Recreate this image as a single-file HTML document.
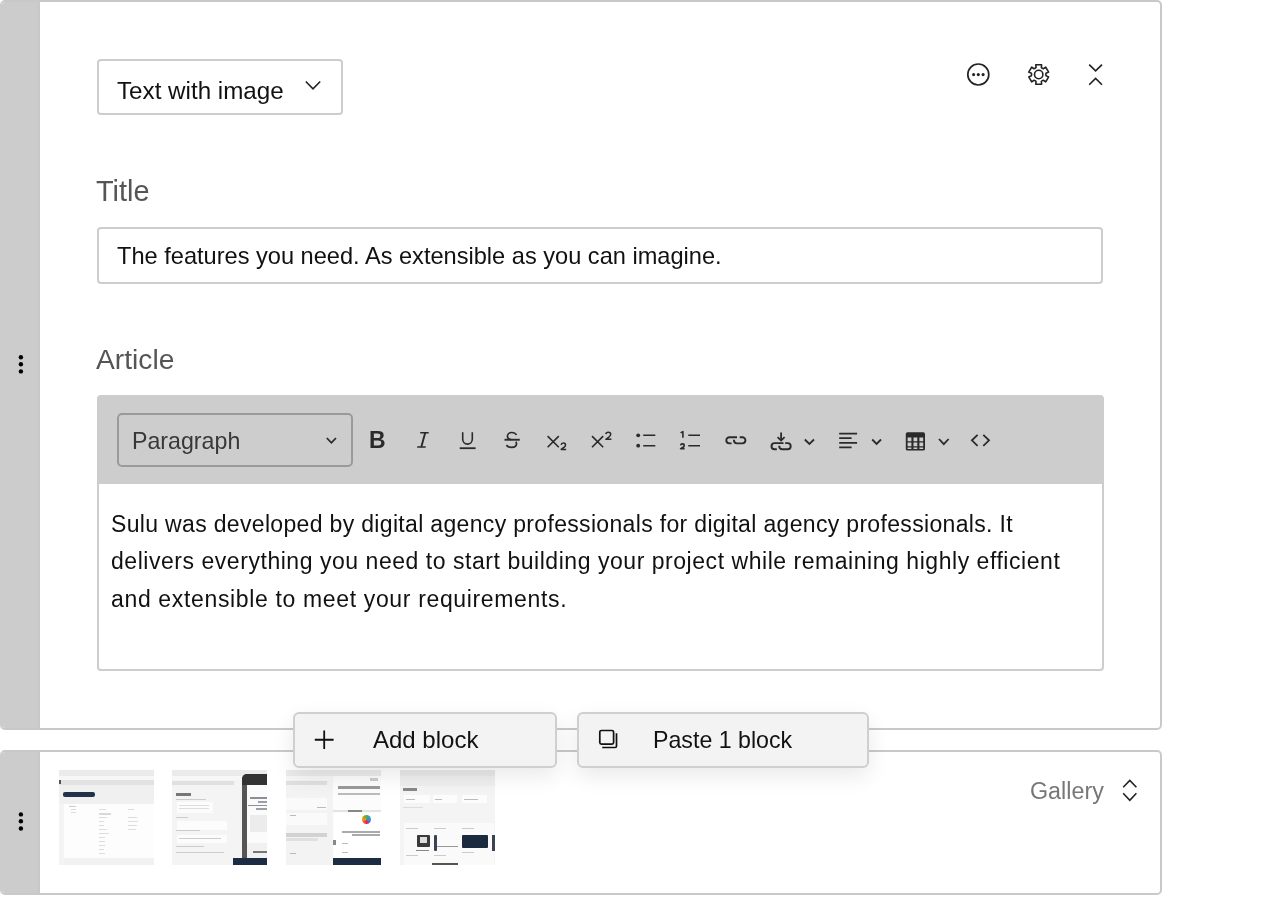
<!DOCTYPE html>
<html><head><meta charset="utf-8">
<style>
html,body{margin:0;padding:0;background:#fff;width:1276px;height:899px;overflow:hidden;font-family:"Liberation Sans",sans-serif;}
.abs{position:absolute;}
.card{position:absolute;box-sizing:border-box;border:2px solid #c9c9c9;border-left-color:#cccccc;border-radius:5px;background:#fff;overflow:hidden;}
.side{position:absolute;left:0;top:0;bottom:0;width:36px;background:#cccccc;border-right:2px solid #c8c8c8;}
.dot{position:absolute;width:4.5px;height:4.5px;border-radius:50%;background:#000;}
.t{position:absolute;white-space:nowrap;line-height:1;will-change:transform;}
.box{position:absolute;box-sizing:border-box;border:2px solid #cdcdcd;border-radius:4px;}
.btn{position:absolute;box-sizing:border-box;border:2px solid #cfcfcf;border-radius:6px;background:#f3f3f3;box-shadow:0 8px 22px rgba(0,0,0,0.09);}
svg.ov{position:absolute;left:0;top:0;overflow:visible;}
.thumb{position:absolute;top:770px;width:95px;height:95px;background:#f4f4f4;overflow:hidden;filter:blur(0.7px);}
</style></head><body>

<!-- Card 1 -->
<div class="card" style="left:0;top:0;width:1162px;height:730px;">
  <div class="side"></div>
</div>

<!-- type dropdown -->
<div class="box" style="left:97px;top:59px;width:246px;height:56px;"></div>
<div class="t" style="left:117px;top:78.9px;font-size:24.2px;color:#111;">Text with image</div>

<!-- Title -->
<div class="t" style="left:96.3px;top:176.8px;font-size:28.9px;color:#555;">Title</div>
<div class="box" style="left:97px;top:227px;width:1006px;height:57px;"></div>
<div class="t" style="left:117px;top:245.2px;font-size:23.6px;color:#111;">The features you need. As extensible as you can imagine.</div>

<!-- Article -->
<div class="t" style="left:96.3px;top:345.3px;font-size:28.2px;color:#555;">Article</div>
<div class="box" style="left:97px;top:395px;width:1007px;height:276px;border-color:#cdcdcd;"></div>
<div class="abs" style="left:97px;top:395px;width:1007px;height:89px;background:#cdcdcd;border-radius:5px 5px 0 0;"></div>
<div class="box" style="left:117px;top:413px;width:236px;height:54px;border-color:#9a9a9a;border-radius:5px;"></div>
<div class="t" style="left:132.4px;top:429.8px;font-size:23.2px;color:#383838;">Paragraph</div>
<div class="t" style="left:369.3px;top:428.6px;font-size:23px;font-weight:bold;color:#2a2a2a;">B</div>

<div class="t" style="left:111px;top:505.8px;font-size:23px;line-height:37.65px;color:#111;letter-spacing:0.33px;">Sulu was developed by digital agency professionals for digital agency professionals. It</div>
<div class="t" style="left:111px;top:543.45px;font-size:23px;line-height:37.65px;color:#111;letter-spacing:0.54px;">delivers everything you need to start building your project while remaining highly efficient</div>
<div class="t" style="left:111px;top:581.1px;font-size:23px;line-height:37.65px;color:#111;letter-spacing:0.65px;">and extensible to meet your requirements.</div>

<!-- Card 2 -->
<div class="card" style="left:0;top:749.5px;width:1162px;height:145.5px;">
  <div class="side"></div>
</div>
<div class="t" style="left:1030px;top:779.9px;font-size:23.3px;color:#777;">Gallery</div>

<div class="thumb" style="left:59px;">
  <div class="abs" style="left:0;top:0;width:95px;height:6px;background:#ebebeb;"></div>
  <div class="abs" style="left:0;top:6px;width:95px;height:4px;background:#f7f7f7;"></div>
  <div class="abs" style="left:0;top:10px;width:95px;height:5px;background:#e2e2e2;"></div>
  <div class="abs" style="left:0;top:15px;width:95px;height:19px;background:#f0f0f0;"></div>
  <div class="abs" style="left:3.5px;top:21.5px;width:32.5px;height:5.5px;background:#22324a;border-radius:2px;"></div>
  <div class="abs" style="left:5px;top:34px;width:90px;height:54px;background:#fdfdfd;"></div>
  <div class="abs" style="left:5px;top:88px;width:90px;height:7px;background:#f1f1f1;"></div>
  <div class="abs" style="left:10px;top:36px;width:7px;height:1px;background:#ccc;"></div>
  <div class="abs" style="left:12px;top:39px;width:5px;height:1px;background:#ddd;"></div>
  <div class="abs" style="left:12px;top:42px;width:5px;height:1px;background:#ddd;"></div>
  <div class="abs" style="left:40px;top:39px;width:7px;height:1px;background:#ddd;"></div>
  <div class="abs" style="left:40px;top:43px;width:12px;height:2px;background:#d8d8d8;"></div>
  <div class="abs" style="left:40px;top:47px;width:8px;height:1px;background:#ddd;"></div>
  <div class="abs" style="left:40px;top:51px;width:5px;height:1px;background:#ddd;"></div>
  <div class="abs" style="left:40px;top:55px;width:5px;height:1px;background:#ddd;"></div>
  <div class="abs" style="left:40px;top:59px;width:8px;height:1px;background:#ddd;"></div>
  <div class="abs" style="left:40px;top:63px;width:10px;height:1px;background:#ddd;"></div>
  <div class="abs" style="left:40px;top:67px;width:6px;height:1px;background:#ddd;"></div>
  <div class="abs" style="left:40px;top:71px;width:6px;height:1px;background:#ddd;"></div>
  <div class="abs" style="left:40px;top:75px;width:6px;height:1px;background:#ddd;"></div>
  <div class="abs" style="left:40px;top:79px;width:5px;height:1px;background:#ddd;"></div>
  <div class="abs" style="left:40px;top:83px;width:6px;height:1px;background:#ddd;"></div>
  <div class="abs" style="left:69px;top:39px;width:6px;height:1px;background:#ddd;"></div>
  <div class="abs" style="left:69px;top:47px;width:9px;height:1px;background:#ddd;"></div>
  <div class="abs" style="left:69px;top:51px;width:10px;height:1px;background:#ddd;"></div>
  <div class="abs" style="left:69px;top:55px;width:9px;height:1px;background:#ddd;"></div>
  <div class="abs" style="left:69px;top:59px;width:8px;height:1px;background:#ddd;"></div>
  <div class="abs" style="left:0;top:10px;width:2px;height:4px;background:#555;"></div>
</div>
<div class="thumb" style="left:172px;">
  <div class="abs" style="left:0;top:0;width:95px;height:6px;background:#ebebeb;"></div>
  <div class="abs" style="left:0;top:6px;width:95px;height:4px;background:#f7f7f7;"></div>
  <div class="abs" style="left:0;top:10.5px;width:62px;height:4.5px;background:#e0e0e0;"></div>
  <div class="abs" style="left:4px;top:22.5px;width:15px;height:3px;background:#777;"></div>
  <div class="abs" style="left:4px;top:29px;width:30px;height:1px;background:#ccc;"></div>
  <div class="abs" style="left:5px;top:32px;width:36px;height:11px;background:#fcfcfc;"></div>
  <div class="abs" style="left:7px;top:35px;width:30px;height:1px;background:#ddd;"></div>
  <div class="abs" style="left:7px;top:38px;width:30px;height:1px;background:#ddd;"></div>
  <div class="abs" style="left:4px;top:47px;width:12px;height:1px;background:#ccc;"></div>
  <div class="abs" style="left:5px;top:51px;width:50px;height:9px;background:#fcfcfc;"></div>
  <div class="abs" style="left:4px;top:60px;width:24px;height:1px;background:#ccc;"></div>
  <div class="abs" style="left:5px;top:65px;width:50px;height:8px;background:#fcfcfc;"></div>
  <div class="abs" style="left:7px;top:68px;width:42px;height:1px;background:#ccc;"></div>
  <div class="abs" style="left:4px;top:76px;width:28px;height:1px;background:#ccc;"></div>
  <div class="abs" style="left:4px;top:82px;width:48px;height:1px;background:#ccc;"></div>
  <div class="abs" style="left:70px;top:4px;width:30px;height:88px;background:#555;border-radius:5px 0 0 0;"></div><div class="abs" style="left:70px;top:4px;width:30px;height:11px;background:#333;border-radius:5px 0 0 0;"></div>
  <div class="abs" style="left:74.5px;top:15px;width:25px;height:75px;background:#fbfbfb;"></div>
  <div class="abs" style="left:78px;top:27px;width:20px;height:2px;background:#8a8f99;"></div>
  <div class="abs" style="left:86px;top:31px;width:12px;height:1.5px;background:#9a9fa8;"></div>
  <div class="abs" style="left:76px;top:34.5px;width:22px;height:1.5px;background:#8a8f99;"></div>
  <div class="abs" style="left:84px;top:38px;width:14px;height:1.5px;background:#9a9fa8;"></div>
  <div class="abs" style="left:78px;top:45px;width:20px;height:17px;background:#ececec;"></div>
  <div class="abs" style="left:74.5px;top:73px;width:25px;height:16px;background:#f1f1f1;"></div>
  <div class="abs" style="left:81px;top:81px;width:17px;height:1.5px;background:#777;"></div>
  <div class="abs" style="left:61px;top:87.5px;width:40px;height:7.5px;background:#1c2c42;"></div>
</div>
<div class="thumb" style="left:286px;">
  <div class="abs" style="left:0;top:0;width:95px;height:6px;background:#ebebeb;"></div>
  <div class="abs" style="left:0;top:6px;width:46px;height:4px;background:#f7f7f7;"></div>
  <div class="abs" style="left:0;top:10.5px;width:41px;height:4.5px;background:#e0e0e0;"></div>
  <div class="abs" style="left:0;top:15px;width:46px;height:80px;background:#f3f3f3;"></div>
  <div class="abs" style="left:0;top:28px;width:41px;height:12px;background:#fafafa;"></div>
  <div class="abs" style="left:0;top:43px;width:41px;height:12px;background:#fafafa;"></div>
  <div class="abs" style="left:31px;top:37px;width:9px;height:1px;background:#bbb;"></div>
  <div class="abs" style="left:4px;top:45px;width:6px;height:1px;background:#bbb;"></div>
  <div class="abs" style="left:0;top:62.5px;width:41px;height:4px;background:#d2d2d2;"></div>
  <div class="abs" style="left:0;top:68px;width:32px;height:3px;background:#e0e0e0;"></div>
  <div class="abs" style="left:4px;top:83px;width:6px;height:1px;background:#bbb;"></div>
  <div class="abs" style="left:47px;top:6px;width:48px;height:89px;background:#fcfcfc;"></div>
  <div class="abs" style="left:52px;top:15.5px;width:42px;height:3px;background:#999;"></div>
  <div class="abs" style="left:52px;top:23px;width:42px;height:1.5px;background:#bbb;"></div>
  <div class="abs" style="left:84px;top:8px;width:8px;height:3px;background:#ccc;"></div>
  <div class="abs" style="left:47px;top:40px;width:48px;height:2px;background:#e3e3e3;"></div>
  <div class="abs" style="left:62px;top:39.5px;width:14px;height:2.5px;background:#888;"></div>
  <div class="abs" style="left:48px;top:43px;width:47px;height:45px;background:#fff;"></div>
  <div class="abs" style="left:76px;top:45px;width:9px;height:9px;border-radius:50%;background:conic-gradient(#4caf50,#2196f3,#e91e63,#ff9800,#4caf50);"></div>
  <div class="abs" style="left:56px;top:61px;width:38px;height:2px;background:#aaa;"></div>
  <div class="abs" style="left:66px;top:64px;width:28px;height:2px;background:#aaa;"></div>
  <div class="abs" style="left:56px;top:73px;width:6px;height:1px;background:#bbb;"></div>
  <div class="abs" style="left:56px;top:82px;width:6px;height:1px;background:#bbb;"></div>
  <div class="abs" style="left:47px;top:70px;width:2.5px;height:5px;background:#888;"></div>
  <div class="abs" style="left:47px;top:87.5px;width:48px;height:7.5px;background:#1c2c42;"></div>
</div>
<div class="thumb" style="left:400px;">
  <div class="abs" style="left:0;top:0;width:95px;height:6px;background:#e8e8e8;"></div>
  <div class="abs" style="left:0;top:6px;width:95px;height:10px;background:#efefef;"></div>
  <div class="abs" style="left:3px;top:18px;width:14px;height:3px;background:#888;"></div>
  <div class="abs" style="left:4px;top:25px;width:26px;height:8px;background:#fcfcfc;"></div>
  <div class="abs" style="left:33px;top:25px;width:24px;height:8px;background:#fcfcfc;"></div>
  <div class="abs" style="left:62px;top:25px;width:25px;height:8px;background:#fcfcfc;"></div>
  <div class="abs" style="left:6px;top:28.5px;width:9px;height:1px;background:#bbb;"></div>
  <div class="abs" style="left:35px;top:28.5px;width:7px;height:1px;background:#bbb;"></div>
  <div class="abs" style="left:64px;top:28.5px;width:14px;height:1px;background:#bbb;"></div>
  <div class="abs" style="left:3px;top:36.5px;width:20px;height:1px;background:#ddd;"></div>
  <div class="abs" style="left:4px;top:53px;width:90px;height:42px;background:#fafafa;"></div>
  <div class="abs" style="left:6px;top:58px;width:12px;height:1px;background:#ccc;"></div>
  <div class="abs" style="left:34px;top:58px;width:12px;height:1px;background:#ccc;"></div>
  <div class="abs" style="left:62px;top:58px;width:12px;height:1px;background:#ccc;"></div>
  <div class="abs" style="left:17px;top:65px;width:12.5px;height:12px;background:#3a3a3a;border-radius:1px;"></div>
  <div class="abs" style="left:19.5px;top:67px;width:7px;height:6px;background:#ddd;"></div>
  <div class="abs" style="left:16px;top:79.5px;width:13px;height:1.5px;background:#888;"></div>
  <div class="abs" style="left:33.5px;top:64.5px;width:3.5px;height:16px;background:#3b4254;border-radius:1px;"></div>
  <div class="abs" style="left:37px;top:75.5px;width:21px;height:1.5px;background:#999;"></div>
  <div class="abs" style="left:62px;top:64.5px;width:25.5px;height:13.5px;background:#1b2a3e;border-radius:1px;"></div>
  <div class="abs" style="left:92px;top:64.5px;width:3px;height:16px;background:#3b4254;"></div>
  <div class="abs" style="left:6px;top:85px;width:12px;height:1px;background:#ccc;"></div>
  <div class="abs" style="left:34px;top:85px;width:12px;height:1px;background:#ccc;"></div>
  <div class="abs" style="left:62px;top:82px;width:12px;height:1px;background:#ccc;"></div>
  <div class="abs" style="left:32px;top:92.5px;width:26px;height:2.5px;background:#555;"></div>
</div>

<!-- buttons -->
<div class="btn" style="left:293px;top:712px;width:264px;height:56px;"></div>
<div class="t" style="left:372.5px;top:727.9px;font-size:24px;color:#111;">Add block</div>

<div class="btn" style="left:577px;top:712px;width:292px;height:56px;"></div>
<div class="t" style="left:652.6px;top:728.8px;font-size:23.2px;color:#111;">Paste 1 block</div>

<svg class="ov" width="1276" height="899" fill="none" stroke-linecap="butt">
  <!-- dropdown chevron -->
  <polyline points="305.8,81.5 313,88.8 320.2,81.5" stroke="#222" stroke-width="1.6"/>
  <!-- header icons -->
  <circle cx="978.3" cy="74.5" r="10.5" stroke="#222" stroke-width="1.7"/>
  <circle cx="973.6" cy="74.6" r="1.55" fill="#222"/>
  <circle cx="978.3" cy="74.6" r="1.55" fill="#222"/>
  <circle cx="983.1" cy="74.6" r="1.55" fill="#222"/>
  <g transform="translate(1038.7,74.5)" stroke="#222" stroke-width="1.6" stroke-linejoin="round">
    <path d="M-2.65,-6.91 L-2.90,-9.78 L2.90,-9.78 L2.65,-6.91 A3,3 0 0 0 4.66,-5.75 L7.02,-7.40 L9.92,-2.38 L7.31,-1.16 A3,3 0 0 0 7.31,1.16 L9.92,2.38 L7.02,7.40 L4.66,5.75 A3,3 0 0 0 2.65,6.91 L2.90,9.78 L-2.90,9.78 L-2.65,6.91 A3,3 0 0 0 -4.66,5.75 L-7.02,7.40 L-9.92,2.38 L-7.31,1.16 A3,3 0 0 0 -7.31,-1.16 L-9.92,-2.38 L-7.02,-7.40 L-4.66,-5.75 A3,3 0 0 0 -2.65,-6.91 Z"/>
    <circle r="4.2"/>
  </g>
  <polyline points="1089.2,64.6 1095.6,70.9 1102,64.6" stroke="#222" stroke-width="1.6"/>
  <polyline points="1089.2,84.7 1095.6,78.4 1102,84.7" stroke="#222" stroke-width="1.6"/>

  <!-- toolbar -->
  <g stroke="#2a2a2a">
    <!-- paragraph chevron -->
    <polyline points="326.8,438 331.4,442.8 336,438" stroke-width="1.8"/>
    <!-- italic I -->
    <path d="M420.2,432.7H428.7M417.2,447.1H425.7" stroke-width="1.5"/>
    <path d="M425.2,432.7L421.3,447.1" stroke-width="1.9"/>
    <!-- underline U -->
    <path d="M462.7,432.3V439.3A4.8,4.8 0 0 0 472.3,439.3V432.3" stroke-width="1.6"/>
    <path d="M459.7,448.2H475.6" stroke-width="1.8"/>
    <!-- strike S -->
    <path d="M516.5,435C515.6,433.3 513.9,432.5 511.8,432.5C509.2,432.5 507.4,434.2 507.4,436.3C507.4,438.2 509,439.3 511.5,439.7" stroke-width="1.6"/>
    <path d="M515.8,441.7C516.3,442.4 516.5,443 516.5,443.8C516.5,446 514.6,447.4 511.7,447.4C509.4,447.4 507.6,446.6 506.4,445.1" stroke-width="1.7"/>
    <path d="M504.5,439.75H519.8" stroke-width="1.9"/>
    <!-- subscript -->
    <path d="M547.6,436.1L558.8,447.2M558.8,436.1L547.6,447.2" stroke-width="1.6"/>
    <!-- superscript -->
    <path d="M592,436.1L603.2,447.2M603.2,436.1L592,447.2" stroke-width="1.6"/>
    <!-- bullet list -->
    <path d="M643.2,435.3H655.3M643.2,445.7H655.3" stroke-width="1.6"/>
    <!-- numbered list -->
    <path d="M688.3,435.3H700M688.3,445.7H700" stroke-width="1.6"/>
    <!-- link -->
    <path d="M737,437.2H729.4A3,3 0 0 0 729.4,443.4H731.6" stroke-width="1.9"/>
    <path d="M733.9,439.8C733.9,442 734.8,443.4 737,443.4H742.3A3,3 0 0 0 742.3,437.2H739.7" stroke-width="1.9"/>
    <!-- internal link -->
    <path d="M781.1,432.6V440" stroke-width="1.8"/>
    <path d="M777.6,437.2L781.1,440.6L784.6,437.2" stroke-width="1.8"/>
    <path d="M783.5,443.1H774.6A3.1,3.1 0 0 0 774.6,449.3H776.8" stroke-width="1.9"/>
    <path d="M779.2,445.8C779.2,448 780,449.3 782.2,449.3H787.6A3.1,3.1 0 0 0 787.6,443.1H785.2" stroke-width="1.9"/>
    <polyline points="804.8,439.5 809.4,444 814,439.5" stroke-width="1.8"/>
    <!-- align -->
    <path d="M839.2,433.7H857.1M839.2,438.1H851.6M839.2,442.8H857.1M839.2,447.4H851.6" stroke-width="1.7"/>
    <polyline points="872.2,439.5 876.6,444 881,439.5" stroke-width="1.8"/>
    <!-- table -->
    <polyline points="939,439 943.8,444.2 948.6,439" stroke-width="1.8"/>
    <!-- code -->
    <path d="M977.6,434.8L971.9,440.3L977.6,445.8M983.3,434.8L989,440.3L983.3,445.8" stroke-width="1.8"/>
  </g>
  <g fill="#2a2a2a">
    <circle cx="638.2" cy="435.3" r="1.9"/>
    <circle cx="638.2" cy="445.7" r="1.9"/>
    <!-- table body -->
    <path d="M907.5,432.2H923.3A1.7,1.7 0 0 1 925,433.9V448.9A1.7,1.7 0 0 1 923.3,450.6H907.5A1.7,1.7 0 0 1 905.8,448.9V433.9A1.7,1.7 0 0 1 907.5,432.2Z M907.6,437.4V441.2H911.4V437.4Z M913.5,437.4V441.2H917.3V437.4Z M919.4,437.4V441.2H923.2V437.4Z M907.6,442.6V446.3H911.4V442.6Z M913.5,442.6V446.3H917.3V442.6Z M919.4,442.6V446.3H923.2V442.6Z M907.6,447.6V448.9H911.4V447.6Z M913.5,447.6V448.9H917.3V447.6Z M919.4,447.6V448.9H923.2V447.6Z" fill-rule="evenodd"/>
  </g>
  <!-- sub/sup numbers and list numbers -->
  <g stroke="#2a2a2a" stroke-width="1.5" stroke-linejoin="round">
    <path d="M561.1,444.8C561.3,443.4 562.2,442.9 563.4,442.9C564.7,442.9 565.5,443.7 565.5,444.9C565.5,445.8 565,446.4 564.2,447.1L561.2,449.4H566.1"/>
    <path d="M605.8,434.2C606,432.7 607,432.2 608.3,432.2C609.7,432.2 610.7,433.1 610.7,434.3C610.7,435.3 610.1,436 609.2,436.8L605.9,439.3H611.4"/>
    <path d="M680.6,432.9L682.9,431.6V437.7" stroke-width="1.6"/>
    <path d="M680.6,445.4C680.7,444.4 681.4,443.9 682.4,443.9C683.5,443.9 684.2,444.6 684.2,445.4C684.2,446.1 683.8,446.6 683.1,447.2L680.6,448.6H684.6" stroke-width="1.6"/>
  </g>

  <!-- handle dots -->
  <g fill="#000">
    <circle cx="20.9" cy="357.2" r="2.2"/><circle cx="20.9" cy="364.2" r="2.2"/><circle cx="20.9" cy="371.4" r="2.2"/>
    <circle cx="20.9" cy="814.4" r="2.2"/><circle cx="20.9" cy="821.3" r="2.2"/><circle cx="20.9" cy="828.5" r="2.2"/>
  </g>
  <!-- gallery expand -->
  <polyline points="1123.2,787.2 1129.8,780.4 1136.4,787.2" stroke="#222" stroke-width="1.6"/>
  <polyline points="1123.2,793.3 1129.8,800.3 1136.4,793.3" stroke="#222" stroke-width="1.6"/>

  <!-- add plus -->
  <path d="M324.2,730.6V748.9M314.8,739.75H333.6" stroke="#111" stroke-width="1.8"/>
  <!-- paste icon -->
  <rect x="599.8" y="730.5" width="13.8" height="13.7" rx="1.6" stroke="#111" stroke-width="1.7"/>
  <path d="M616.5,733.2V746.2A1.3,1.3 0 0 1 615.2,747.5H602.2" stroke="#111" stroke-width="1.7"/>
</svg>

</body></html>
